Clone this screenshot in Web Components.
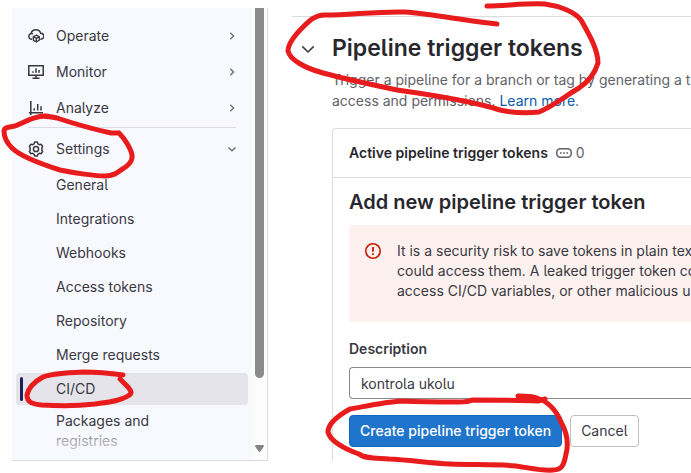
<!DOCTYPE html>
<html lang="en">
<head>
<meta charset="utf-8">
<title>CI/CD Settings</title>
<style>
  html, body { margin: 0; background: #fff; }
  body { font: 14px/20px Inter, "Liberation Sans", sans-serif; font-feature-settings: "cv05"; color: #3a383f; }
</style>
</head>
<body>
<settings-page></settings-page>

<script>
const ICONS = {
  operate: '<path d="M4.2 11.3H3.6a2.9 2.9 0 0 1-.6-5.7A5 5 0 0 1 12.700 5.300a2.900 2.900 0 0 1 .3 5.900h-.7M3 5.600c.9-.1 1.500.2 1.900.6" stroke-width="1.500"/><path d="M8.300 7.200l3 1.500v3.500l-3 1.700-3-1.700V8.700zM5.300 8.800l3 1.600 3-1.600M8.300 10.400v3.400" stroke-width="1.300"/>',
  monitor: '<path d="M.8 1.800h14.400v9.400H.8zM8 11.500v2.700M4.500 14.300h7" stroke-width="1.500"/><path d="M5 7.200v1.600M8 4.300v4.500M11 6v2.800" stroke-width="1.500"/>',
  analyze: '<path d="M2.800 1v14M1 12.800h14" stroke-width="1.500"/><path d="M6.200 8.200v2.300M9.700 4v6.500M13 6.200v4.300" stroke-width="1.500"/>',
  settings: '<path d="M6.700 1h2.600l.6 1.800 1.500.9 1.900-.4 1.300 2.200-.7 1.100v2.800l.7 1.100-1.300 2.200-1.900-.4-1.500.9L9.300 15H6.700l-.6-1.800-1.500-.9-1.900.4-1.300-2.200.7-1.100V6.600l-.7-1.100 1.300-2.200 1.900.4 1.500-.9z" stroke-width="1.500" stroke-linejoin="round"/><circle cx="8" cy="8" r="2.600" stroke-width="1.500"/>',
  right: '<path d="M6.300 4.800L9.500 8l-3.200 3.200" stroke-width="1.500"/>',
  down: '<path d="M4.500 6.500L8 9.800l3.500-3.300" stroke-width="1.500"/>',
  expand: '<path d="M2.300 5.400L8 11l5.700-5.600" stroke-width="1.600"/>',
  error: '<circle cx="8" cy="8" r="7.200" stroke-width="1.600"/><path d="M8 4v4.800M8 10.200v1.800" stroke-width="1.800"/>',
  token: '<rect x=".8" y="3.800" width="14.400" height="8.400" rx="3.500" stroke-width="1.500"/><path d="M4 8h1.700M7.150 8h1.700M10.300 8H12" stroke-width="1.700"/>'
};

function define(name, render) {
  customElements.define(name, class extends HTMLElement {
    connectedCallback() {
      if (this.shadowRoot) return;
      const t = document.createElement('template');
      t.innerHTML = '<style>*{box-sizing:border-box}</style>' + render(this);
      this.attachShadow({ mode: 'open' }).append(t.content.cloneNode(true));
    }
  });
}

define('ui-icon', el => `
  <style>
    :host { display: block; flex: none; width: 16px; height: 16px; }
    svg { display: block; width: 16px; height: 16px; fill: none; stroke: currentColor; }
  </style>
  <svg viewBox="0 0 16 16" aria-hidden="true">${ICONS[el.getAttribute('name')]}</svg>`);

define('nav-section', el => `
  <style>
    :host { display: block; }
    button { display: flex; align-items: center; gap: 12px; width: 100%; height: 32px; padding: 0 8px 0 12px;
      border: 0; background: none; font: inherit; font-feature-settings: inherit; color: inherit; text-align: left; }
    span { flex: 1; }
    .arrow { color: #737278; }
  </style>
  <button type="button" aria-expanded="${el.hasAttribute('open')}">
    <ui-icon name="${el.getAttribute('icon')}"></ui-icon><span><slot></slot></span>
    <ui-icon class="arrow" name="${el.hasAttribute('open') ? 'down' : 'right'}"></ui-icon>
  </button>`);

define('nav-link', () => `
  <style>
    :host { display: block; }
    a { display: flex; align-items: center; position: relative; min-height: 32px; padding: 4px 80px 4px 40px; border-radius: 4px;
      color: inherit; text-decoration: none; }
    :host([current]) a { background: #e5e4ea; }
    :host([current]) a::before { content: ""; position: absolute; left: 4px; top: 4px; bottom: 4px; width: 3px;
      border-radius: 2px; background: #1f1e5c; }
  </style>
  <a href="#"><span><slot></slot></span></a>`);

define('side-scrollbar', () => `
  <style>
    :host { display: flex; flex-direction: column; align-items: center; width: 15px; background: #fcfcfc; }
    .thumb { flex: 1; width: 9px; border-radius: 0 0 5px 5px; background: #8b8b8b; }
    svg { display: block; width: 9px; height: 7px; margin: 67px 0 8px; fill: #858585; }
  </style>
  <div class="thumb"></div>
  <svg viewBox="0 0 9 7"><path d="M1 0h7q1.500.6.7 1.800L5.500 6.300q-1 1.200-2 0L.3 1.800Q-.5.600 1 0z"/></svg>`);

define('side-nav', () => `
  <style>
    :host { display: flex; flex: none; width: 256px; border: solid #dcdcde; border-width: 0 1px 1px 0; }
    nav { flex: 1; position: relative; padding: 12px 4px 5px; background: #f8f8ff; }
    .top, .sub { display: grid; gap: 4px; }
    .sub { gap: 2px; padding-top: 4px; }
    hr { margin: 3px 12px 5px; border: 0; border-top: 1px solid #dcdce4; }
    .fade { position: absolute; inset: auto 0 0; height: 32px;
      background: linear-gradient(#f8f8ff00, #f8f8ff99 40%, #f8f8ffcc); pointer-events: none; }
  </style>
  <nav aria-label="Project">
    <div class="top">
      <nav-section icon="operate">Operate</nav-section>
      <nav-section icon="monitor">Monitor</nav-section>
      <nav-section icon="analyze">Analyze</nav-section>
    </div>
    <hr>
    <nav-section icon="settings" open>Settings</nav-section>
    <div class="sub">
      <nav-link>General</nav-link>
      <nav-link>Integrations</nav-link>
      <nav-link>Webhooks</nav-link>
      <nav-link>Access tokens</nav-link>
      <nav-link>Repository</nav-link>
      <nav-link>Merge requests</nav-link>
      <nav-link current>CI/CD</nav-link>
      <nav-link>Packages and registries</nav-link>
    </div>
    <div class="fade"></div>
  </nav>
  <side-scrollbar></side-scrollbar>`);

define('ui-alert', () => `
  <style>
    :host { display: flex; gap: 16px; padding: 16px 0 20px 16px; min-height: 97px; border-radius: 4px 0 0 4px; background: #fcf1ef; }
    ui-icon { margin-top: 2px; color: #c91c00; }
    p { margin: 0; white-space: nowrap; }
  </style>
  <ui-icon name="error"></ui-icon><p><slot></slot></p>`);

define('ui-button', () => `
  <style>
    :host { display: block; }
    button { height: 32px; padding: 0 10px; border: 1px solid #bfbfc3; border-radius: 4px; background: #fff;
      font: inherit; font-feature-settings: inherit; color: inherit; white-space: nowrap; }
    :host([primary]) button { border-color: #1068bf; background: #1f75cb; color: #fff; font-weight: 500; }
  </style>
  <button type="button"><slot></slot></button>`);

define('token-form', () => `
  <style>
    :host { display: block; padding: 12px 0 14px 16px; }
    h3 { margin: 0 0 11px; font-size: 20px; line-height: 24px; font-weight: 600; color: #28272d; white-space: nowrap; }
    label { display: block; margin: 17px 0 8px; font-weight: 600; }
    input { display: block; width: 100%; height: 32px; padding: 0 11px; border: 1px solid #89888d; border-right: 0;
      border-radius: 4px 0 0 4px; background: #fff; font: inherit; font-feature-settings: inherit; color: inherit; outline: 0; }
    .actions { display: flex; gap: 8px; margin-top: 16px; }
  </style>
  <h3>Add new pipeline trigger token</h3>
  <ui-alert>It is a security risk to save tokens in plain tex<br>could access them. A leaked trigger token co<br>access CI/CD variables, or other malicious u</ui-alert>
  <label for="description">Description</label>
  <input id="description" type="text" value="kontrola ukolu">
  <div class="actions">
    <ui-button primary>Create pipeline trigger token</ui-button>
    <ui-button>Cancel</ui-button>
  </div>`);

define('token-card', () => `
  <style>
    :host { display: block; border: solid #dcdcde; border-width: 1px 0 0 1px; border-radius: 4px 0 0 0; }
    header { display: flex; align-items: center; gap: 8px; height: 49px; padding-left: 16px; border-bottom: 1px solid #dcdcde; white-space: nowrap; }
    h3 { margin: 0; font-size: 14px; line-height: 20px; font-weight: 600; color: #28272d; }
    .count { display: flex; align-items: center; gap: 4px; color: #626168; }
  </style>
  <header>
    <h3>Active pipeline trigger tokens</h3>
    <span class="count"><ui-icon name="token"></ui-icon><span>0</span></span>
  </header>
  <token-form></token-form>`);

define('token-settings', () => `
  <style>
    :host { display: grid; grid-template-columns: 24px 1fr; column-gap: 8px; flex: 1; min-width: 0; margin-top: 8px;
      padding: 16px 0 0 8px; border-top: 1px solid #dcdcde; overflow: hidden; }
    .toggle { display: grid; place-items: center; width: 16px; height: 32px; padding: 0; border: 0; background: none; color: #3a383f; }
    .content { min-width: 0; }
    h2 { margin: 0; font-size: 23px; line-height: 30px; font-weight: 600; color: #28272d; white-space: nowrap; }
    p { margin: 6px 0 17px; line-height: 21px; color: #626168; white-space: nowrap; }
    a { color: #0b5cad; text-decoration: none; }
  </style>
  <button class="toggle" type="button" aria-label="Collapse" aria-expanded="true"><ui-icon name="expand"></ui-icon></button>
  <div class="content">
    <h2>Pipeline trigger tokens</h2>
    <p>Trigger a pipeline for a branch or tag by generating a t<br>access and permissions. <a href="#">Learn more</a>.</p>
    <token-card></token-card>
  </div>`);

define('pen-marks', () => `
  <style>
    :host { position: absolute; left: 0; top: 0; pointer-events: none; }
    svg { display: block; fill: none; stroke: #e81c1c; stroke-width: 5; stroke-linecap: round; stroke-linejoin: round; }
  </style>
  <svg width="691" height="473" viewBox="0 0 691 473" aria-hidden="true">
    <path d="M117 133H111C88 128 72 123 57 118C48 116 43 115 38 117C28 119 21 124 15 126C9 127 4 127 4 131C4 138 7 143 12 148C20 156 38 163 60 170C74 173 96 176 105 176C113 176 117 173 121 170C128 166 133 161 132 155C131 149 125 139 119 133"/>
    <path d="M123 375C109 373 95 372 83 372C66 373 52 373 43 377C34 382 28 389 27 395C27 403 33 404 42 405C59 406 78 406 95 404C109 402 120 401 128 396C133 393 131 391 128 387L120 379"/>
    <path d="M497 24C466 21 432 14 405 12C379 11 350 15 326 15C316 14 309 21 303 27C296 34 288 44 288 51C290 60 305 68 323 73C345 79 374 85 397 90C440 96 475 102 500 110C514 113 529 113 539 112C554 106 565 96 579 88C588 82 595 73 598 63C598 50 590 36 581 20C575 12 560 6 545 4C525 3 505 6 487 6"/>
    <path d="M545 399L538 401C519 400 493 400 472 400C468 402 465 402 459 402C438 402 421 402 402 401C385 402 367 406 350 409C341 414 328 423 328 432C330 441 345 449 359 454C365 459 378 458 389 459C410 460 429 463 450 464C474 465 496 464 516 466C530 468 543 471 553 470C562 470 564 465 566 454C569 443 566 431 561 422C557 412 549 402 537 398C532 396 525 396 518 396"/>
  </svg>`);

define('settings-page', () => `
  <style>
    :host { display: flex; gap: 24px; position: relative; padding: 8px 0 12px 12px; overflow: hidden; }
  </style>
  <side-nav></side-nav>
  <token-settings></token-settings>
  <pen-marks></pen-marks>`);
</script>
</body>
</html>
